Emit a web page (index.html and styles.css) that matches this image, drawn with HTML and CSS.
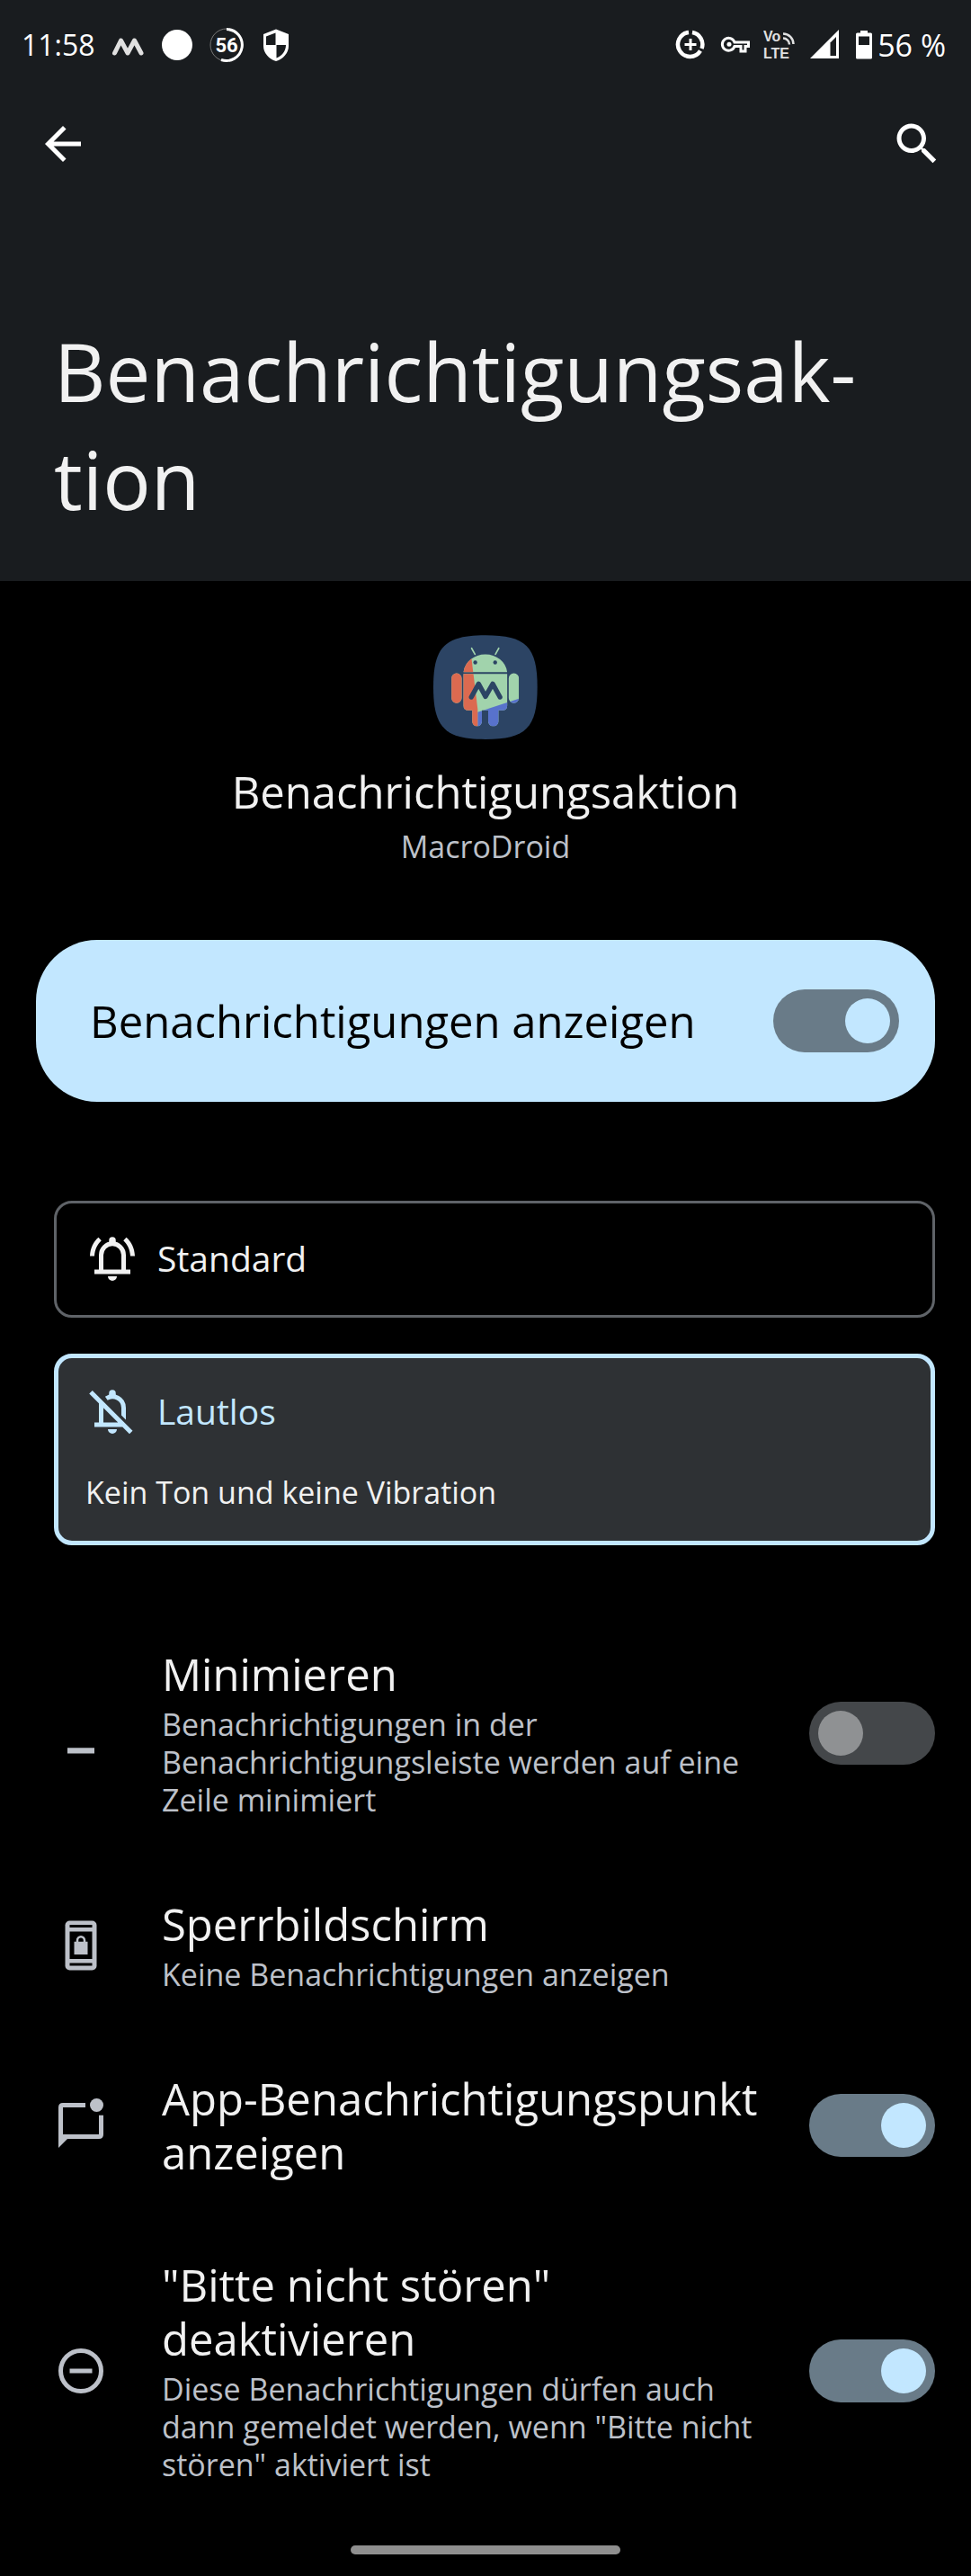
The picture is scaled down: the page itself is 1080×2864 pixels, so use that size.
FILE: index.html
```html
<!DOCTYPE html>
<html lang="de">
<head>
<meta charset="utf-8">
<meta name="viewport" content="width=device-width, initial-scale=1">
<title>Benachrichtigungsaktion</title>
<link rel="stylesheet" href="styles.css">
</head>
<body>
<header class="header">
  <div class="status">
    <div class="status-start">
      <span class="clock">11:58</span>
      <svg class="status-icon" viewBox="0 0 40 40"><path d="M5.500 29 12.500 15 20 29 27.500 15 35 29" fill="none" stroke="#e0e0e0" stroke-width="5" stroke-linecap="round" stroke-linejoin="round"/></svg>
      <svg class="status-icon" viewBox="0 0 40 40"><circle cx="20" cy="20" r="17" fill="#fff"/></svg>
      <svg class="status-icon" viewBox="0 0 40 40"><circle cx="20" cy="20" r="18" fill="none" stroke="#777" stroke-width="1"/><path d="M20 2.500A17.500 17.500 0 1 1 14 36.500" fill="none" stroke="#fff" stroke-width="3"/><text class="badge-text" x="20" y="28" text-anchor="middle">56</text></svg>
      <svg class="status-icon" viewBox="0 0 40 40"><path d="M20 2.500 34 8v13c0 8-6 14.500-14 17C12 35.500 6 29 6 21V8z" fill="#fff"/><path d="M19.500 6.500V20H9V10.500zM20.500 20H31c0 7-4.500 12-10.500 14.500z" fill="#191c1f"/></svg>
    </div>
    <div class="status-end">
      <svg class="status-icon" viewBox="0 0 40 40"><g fill="none" stroke="#fff" stroke-width="4.500"><path d="M19 6A13.500 13.500 0 1 0 32 26.500M23 6A13.500 13.500 0 0 1 33.500 24"/><path d="M21 13v13M14.500 19.500h13" stroke-width="3"/></g></svg>
      <svg class="status-icon" viewBox="0 0 40 40"><path d="M19 17H34.500V21.500H31V27H26V21.500H19A7 7 0 1 1 19 17z" fill="none" stroke="#fff" stroke-width="3"/><circle cx="13" cy="19.300" r="2.500" fill="#fff"/></svg>
      <svg class="status-icon" viewBox="0 0 40 40"><text class="volte" x="0" y="16">Vo</text><text class="volte" x="0" y="35">LTE</text><path d="M22 12.500a7 7 0 0 1 7 7M22 7.500A11.500 11.500 0 0 1 33.500 19" fill="none" stroke="#e0e0e0" stroke-width="2.500"/></svg>
      <svg class="status-icon" viewBox="0 0 40 40"><path d="M1 35H33V3z" fill="#fff"/><path d="M23.500 17.500 30 11V32H23.500z" fill="#191c1f"/></svg>
      <span class="battery">
        <svg class="battery-icon" viewBox="0 0 20 34"><path d="M1 5q0-1.500 1.500-1.500H6V1h8v2.500h3.500Q19 3.500 19 5V31q0 1.500-1.500 1.500h-15Q1 32.500 1 31z" fill="#fff"/><path d="M4 7.500H16V17H4z" fill="#191c1f"/></svg>
        <span>56&nbsp;%</span>
      </span>
    </div>
  </div>
  <nav class="toolbar">
    <button class="icon-button" type="button" aria-label="Zurück"><svg class="icon" viewBox="0 0 24 24"><path d="M20 11H7.830l5.590-5.590L12 4l-8 8 8 8 1.410-1.410L7.830 13H20z" fill="currentColor"/></svg></button>
    <button class="icon-button" type="button" aria-label="Suchen"><svg class="icon" viewBox="0 0 24 24"><path d="M15.500 14h-.79l-.28-.27C15.410 12.590 16 11.110 16 9.500 16 5.910 13.090 3 9.500 3S3 5.910 3 9.500 5.910 16 9.500 16c1.610 0 3.090-.59 4.230-1.570l.27.280v.79l5 4.990L20.490 19l-4.990-5zm-6 0C7.010 14 5 11.990 5 9.500S7.010 5 9.500 5 14 7.010 14 9.500 11.990 14 9.500 14z" fill="currentColor"/></svg></button>
  </nav>
  <h1 class="title">Benachrichtigungsak&shy;tion</h1>
</header>

<main class="content">
  <section class="app">
    <svg class="app-icon" viewBox="127 80 346 346">
      <defs><clipPath id="robot">
        <path d="M227 203a73 67 0 0 1 145 0zM227 209h145v105q0 16-16 16H343v36a17 17 0 0 1-34 0V330H288v37a16 16 0 0 1-32 0V330H243q-16 0-16-16z"/>
        <rect x="187" y="207" width="34" height="99" rx="17"/><rect x="377" y="207" width="34" height="99" rx="17"/>
      </clipPath></defs>
      <path d="M300 81C434 81 472 119 472 253S434 426 300 426 127 387 127 253 166 81 300 81z" fill="#2c4464"/>
      <path d="M254 124l11 20M344 124l-11 20" stroke="#a1d3ac" stroke-width="5" stroke-linecap="round"/>
      <g clip-path="url(#robot)">
        <path d="M180 120H420V400H180z" fill="#a1d3ac"/>
        <path d="M274 336 420 288V400H274z" fill="#5872cc"/>
        <path d="M180 120H249L274 325V400H180z" fill="#dc6a50"/>
      </g>
      <circle cx="266" cy="171" r="6.500" fill="#2c4464"/><circle cx="332" cy="171" r="6.500" fill="#2c4464"/>
      <path d="M253 286 277 242 300 284 324 242 348 286" fill="none" stroke="#2c4464" stroke-width="16" stroke-linecap="round" stroke-linejoin="round"/>
    </svg>
    <h2 class="app-title">Benachrichtigungsaktion</h2>
    <p class="summary">MacroDroid</p>
  </section>

  <label class="main-switch">
    <span>Benachrichtigungen anzeigen</span>
    <input class="switch" type="checkbox" role="switch" checked>
  </label>

  <div class="options">
    <button class="option" type="button">
      <span class="option-head">
        <svg class="icon" viewBox="0 0 24 24"><path d="M7 18V10.500a5 5 0 0 1 10 0V18M4 18H20" fill="none" stroke="currentColor" stroke-width="2"/><path d="M10.500 5V4a1.500 1.500 0 0 1 3 0V5zM10 20h4a2 2 0 0 1-4 0zM7.100 4.080 5.800 2.650C3.600 4.480 2.170 7.300 2 11h2c.15-2.850 1.300-5.170 3.100-6.920zM20 11h2c-.15-3.700-1.600-6.520-3.800-8.350L16.900 4.080C18.700 5.830 19.850 8.150 20 11z" fill="currentColor"/></svg>
        <span>Standard</span>
      </span>
    </button>
    <button class="option option-selected" type="button" aria-pressed="true">
      <span class="option-head">
        <svg class="icon" viewBox="0 0 24 24"><path d="M7 8V18M4 18H17M9.300 6.300A5 5 0 0 1 17 10.500V13.500M2.400 3.500 20.300 21.400" fill="none" stroke="currentColor" stroke-width="2"/><path d="M16 12.500h2v3.300l-2-2zM10.500 5V4a1.500 1.500 0 0 1 3 0V6h-3zM10 20h4a2 2 0 0 1-4 0z" fill="currentColor"/></svg>
        <span>Lautlos</span>
      </span>
      <span class="option-note">Kein Ton und keine Vibration</span>
    </button>
  </div>

  <ul class="settings">
    <li class="setting">
      <svg class="icon" viewBox="0 0 24 24"><path d="M6 18.500h12V21H6z" fill="currentColor"/></svg>
      <label class="setting-text" for="minimize"><span class="setting-title">Minimieren</span><span class="summary">Benachrichtigungen in der Benachrichtigungsleiste werden auf eine Zeile minimiert</span></label>
      <input class="switch" type="checkbox" role="switch" id="minimize">
    </li>
    <li class="setting">
      <svg class="icon" viewBox="0 0 24 24"><rect x="5" y="1" width="14" height="22" rx="2" fill="currentColor"/><path d="M7 2.800h10V4H7zM7 5.800h10V18H7zM7 19.800h10V21H7z" fill="#000"/><path d="M9 10.300h6V16H9z" fill="currentColor"/><path d="M10.400 11V9.700a1.600 1.600 0 0 1 3.200 0V11" fill="none" stroke="currentColor"/></svg>
      <a class="setting-text" href="#"><span class="setting-title">Sperrbildschirm</span><span class="summary">Keine Benachrichtigungen anzeigen</span></a>
    </li>
    <li class="setting">
      <svg class="icon" viewBox="0 0 24 24"><path d="M14 3H4Q3 3 3 4V17H20q1 0 1-1V7.500" fill="none" stroke="currentColor" stroke-width="2"/><path d="M2 17V22l4-4z" fill="currentColor"/><circle cx="19" cy="3" r="3" fill="currentColor"/></svg>
      <label class="setting-text" for="dot"><span class="setting-title">App-Benachrichtigungspunkt anzeigen</span></label>
      <input class="switch" type="checkbox" role="switch" id="dot" checked>
    </li>
    <li class="setting">
      <svg class="icon" viewBox="0 0 24 24"><circle cx="12" cy="12" r="9" fill="none" stroke="currentColor" stroke-width="2"/><path d="M7 11h10v2H7z" fill="currentColor"/></svg>
      <label class="setting-text" for="dnd"><span class="setting-title">"Bitte nicht stören" deaktivieren</span><span class="summary">Diese Benachrichtigungen dürfen auch dann gemeldet werden, wenn "Bitte nicht stören" aktiviert ist</span></label>
      <input class="switch" type="checkbox" role="switch" id="dnd" checked>
    </li>
  </ul>
</main>
<footer class="gesture"><span class="gesture-bar"></span></footer>
</body>
</html>
```
FILE: styles.css
```css
* { box-sizing: border-box; }

body {
  margin: 0;
  background: #000;
  color: #f1f1f1;
  font-family: "Open Sans", "Noto Sans", sans-serif;
  font-size: 49px;
  line-height: 60px;
}

h1, h2, p, ul { margin: 0; padding: 0; font-weight: 400; }

button { font: inherit; color: inherit; cursor: pointer; }

.icon { display: block; flex: none; width: 60px; height: 60px; overflow: visible; }

.header { background: #191c1f; padding-bottom: 53px; }

.status {
  display: flex;
  align-items: center;
  justify-content: space-between;
  height: 100px;
  padding: 0 28px 0 24px;
  color: #fff;
  font-size: 32px;
  line-height: 40px;
}

.status-start, .status-end { display: flex; align-items: center; }
.status-start { gap: 15px; }
.status-end { gap: 11px; font-size: 34px; }

.clock { width: 83px; }
.status-icon { flex: none; width: 40px; height: 40px; }
.battery { display: flex; align-items: center; gap: 5px; }
.battery-icon { width: 20px; height: 34px; }
.badge-text { font: 700 22px Roboto, sans-serif; fill: #fff; }
.volte { font: 700 16px "Liberation Sans", sans-serif; fill: #e0e0e0; }

.toolbar {
  display: flex;
  justify-content: space-between;
  padding: 30px 30px 0 40px;
  color: #fff;
}

.icon-button { padding: 0; border: 0; background: none; }

.title {
  padding: 163px 60px 0;
  font-size: 89px;
  line-height: 120px;
}

.app {
  display: flex;
  flex-direction: column;
  align-items: center;
  padding-top: 60px;
}

.app-icon { width: 116px; height: 116px; }
.app-title { margin: 28px 0 10px; font-size: 49px; }

.summary { color: #bdc1c9; font-size: 34px; line-height: 42px; }

.main-switch {
  display: flex;
  align-items: center;
  justify-content: space-between;
  margin: 83px 40px 0;
  padding: 55px 40px 55px 60px;
  border-radius: 68px;
  background: #c2e7ff;
  color: #000;
}

.switch {
  display: flex;
  flex: none;
  align-items: center;
  appearance: none;
  width: 140px;
  height: 70px;
  margin: 0;
  padding: 10px;
  border-radius: 35px;
  background: #44474a;
}

.switch::before {
  content: "";
  width: 50px;
  height: 50px;
  border-radius: 50%;
  background: #8f9193;
}

.switch:checked { justify-content: flex-end; background: #697b88; }
.switch:checked::before { background: #c2e7ff; }

.options {
  display: grid;
  gap: 40px;
  margin: 110px 40px 0 60px;
}

.option {
  padding: 31px 32px 33px;
  border: 3px solid #5f6368;
  border-radius: 20px;
  background: none;
  text-align: left;
}

.option-head {
  display: flex;
  align-items: center;
  gap: 20px;
  font-size: 39px;
}

.option-selected { border: 5px solid #c2e7ff; background: #2e3134; padding: 29px 30px 33px; }
.option-selected .option-head { color: #c2e7ff; }

.option-note {
  display: block;
  margin-top: 39px;
  font-size: 34px;
  line-height: 42px;
}

.settings {
  display: grid;
  gap: 87px;
  margin: 113px 40px 0 60px;
  list-style: none;
}

.setting { display: flex; align-items: center; color: #bdc1c9; }

.setting-text {
  display: grid;
  flex: 1;
  gap: 5px;
  margin-left: 60px;
  color: inherit;
  text-decoration: none;
}

.setting-title { color: #f1f1f1; }

.setting .switch { margin-left: 40px; }

.gesture { display: flex; justify-content: center; padding: 69px 0 25px; }
.gesture-bar { width: 300px; height: 10px; border-radius: 5px; background: #8f8f8f; }
```
